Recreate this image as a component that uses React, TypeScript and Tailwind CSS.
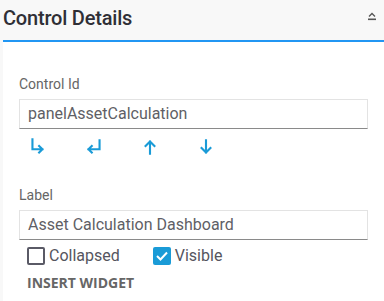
import React from "react";

function ArrowIcon({ d }: { d: string }) {
  return (
    <svg width="20" height="20" viewBox="0 0 18 18" fill="none" stroke="#1a9bd7" strokeWidth="1.9" strokeLinecap="square">
      <path d={d} />
    </svg>
  );
}

export default function App() {
  return (
    <div className="w-[384px] h-[301px] bg-[#f8f8f8] flex flex-col overflow-hidden" style={{ fontFamily: "Roboto, sans-serif" }}>
      <div className="h-[40px] flex items-center justify-between pl-[3px] pr-[6px] bg-[#f8f8f8]">
        <span className="text-[20px] text-[#2f2f36] font-medium tracking-[-0.2px] mt-[-5px]">Control Details</span>
        <svg width="12" height="10" viewBox="0 0 12 10" className="mt-[-8px]">
          <path d="M3 5.5 L6 2.5 L9 5.5" stroke="#555" strokeWidth="1.3" fill="none" />
          <rect x="2" y="7.5" width="8" height="1.6" fill="#555" />
        </svg>
      </div>
      <div className="ml-[3px] flex-1 bg-white border-t-2 border-[#2196f3] px-[16px] pt-[34px]">
        <div className="text-[14px] text-[#666] leading-[16px]">Control Id</div>
        <div className="mt-[7px] h-[30px] border border-[#e3e3e3] border-b-[#8a8a8a] flex items-center px-[8px] text-[16px] text-[#5f5f66]">
          panelAssetCalculation
        </div>
        <div className="flex items-center h-[36px] pl-[9px] gap-[36px]">
          <ArrowIcon d="M4 2 V11 H13 M10 8 L13 11 L10 14" />
          <ArrowIcon d="M14 3 V11 H4 M7 8 L4 11 L7 14" />
          <ArrowIcon d="M9 15 V4 M5 8 L9 4 L13 8" />
          <ArrowIcon d="M9 3 V14 M5 10 L9 14 L13 10" />
        </div>
        <div className="mt-[22px] text-[14px] text-[#666] leading-[16px]">Label</div>
        <div className="mt-[7px] h-[30px] border border-[#e3e3e3] border-b-[#8a8a8a] flex items-center px-[8px] text-[16px] text-[#5f5f66]">
          Asset Calculation Dashboard
        </div>
        <div className="flex items-center h-[32px] pl-[8px] text-[16px] text-[#55555e]">
          <span className="w-[18px] h-[18px] border-2 border-[#5a5a66] rounded-[2px]" />
          <span className="ml-[4px]">Collapsed</span>
          <span className="ml-[33px] w-[18px] h-[18px] bg-[#1a9bd7] rounded-[2px] flex items-center justify-center">
            <svg width="14" height="14" viewBox="0 0 14 14"><path d="M2 7 L5.5 10.5 L12 3.5" stroke="white" strokeWidth="2" fill="none" /></svg>
          </span>
          <span className="ml-[4px]">Visible</span>
        </div>
        <div className="pl-[8px] text-[14px] font-bold text-[#666]" style={{ fontFamily: "'Open Sans', sans-serif" }}>INSERT WIDGET</div>
      </div>
    </div>
  );
}
